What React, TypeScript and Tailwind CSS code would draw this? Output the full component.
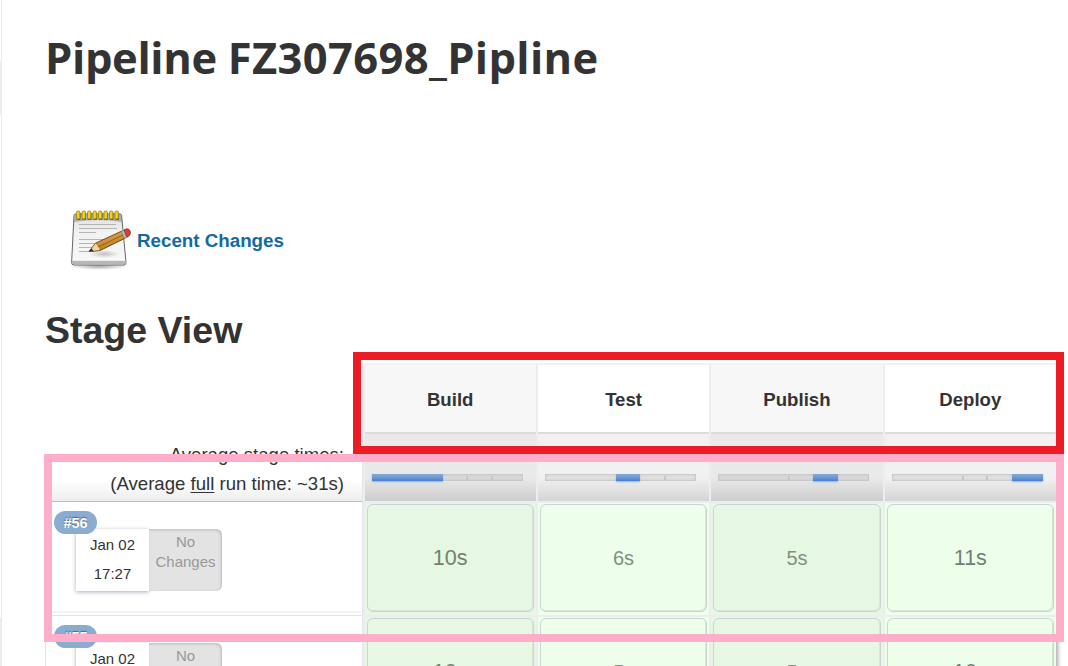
import React from "react";

type Segment = { left: number; width: number };
type Stage = { name: string; average: string; done: Segment; ticks: number[]; shaded: boolean };

const stages: Stage[] = [
  { name: "Build", average: "10s", done: { left: 0, width: 71 }, ticks: [94, 119], shaded: true },
  { name: "Test", average: "6s", done: { left: 71, width: 24 }, ticks: [119], shaded: false },
  { name: "Publish", average: "5s", done: { left: 95, width: 25 }, ticks: [70], shaded: true },
  { name: "Deploy", average: "9s", done: { left: 120, width: 31 }, ticks: [70, 94], shaded: false },
];

const runs = [
  { id: "#56", date: "Jan 02", time: "17:27", times: ["10s", "6s", "5s", "11s"] },
  { id: "#55", date: "Jan 02", time: "17:25", times: ["10s", "5s", "5s", "10s"] },
];

const columns = "grid grid-cols-4 gap-x-[2px] pl-[1.500px] bg-[#ededef]";

function NotepadIcon() {
  return (
    <svg width="64" height="64" viewBox="0 0 64 64" className="shrink-0">
      <defs>
        <linearGradient id="paper" x1="0" y1="0" x2="0" y2="1">
          <stop offset="0" stopColor="#dcdcdc" />
          <stop offset="0.35" stopColor="#f2f2f2" />
          <stop offset="1" stopColor="#f7f7f7" />
        </linearGradient>
        <linearGradient id="wood" x1="0" y1="0" x2="0.5" y2="1">
          <stop offset="0" stopColor="#e9b768" />
          <stop offset="1" stopColor="#b87518" />
        </linearGradient>
        <radialGradient id="shade">
          <stop offset="0" stopColor="#000" stopOpacity="0.35" />
          <stop offset="1" stopColor="#000" stopOpacity="0" />
        </radialGradient>
      </defs>
      <ellipse cx="31" cy="58" rx="30" ry="4" fill="url(#shade)" />
      <path d="M7.5 6H52Q53.500 6 53.600 7.500L58 54.500Q58 57 56 57H6Q3.500 57 3.600 54.500L6 7.500Q6 6 7.500 6Z" fill="url(#paper)" stroke="#666" strokeWidth="1" />
      <path d="M6.500 6.500H53L54 14Q30 10 6 14Z" fill="#8c8c87" opacity="0.6" />
      <path d="M4 52.500H57.500L57.500 56H4Z" fill="#b6b6b6" />
      <path d="M4.500 52H57" stroke="#fff" />
      <path d="M11 16.500H48M11 20.500H49M11 24.500H28M11 31.500H45M11 35.500H40M11 39.500H32M11 43.500H25" stroke="#b5b5b5" strokeWidth="1.1" />
      {[10, 15.5, 21, 26.5, 32, 37.5, 43, 48.5].map((x) => (
        <g key={x}>
          <rect x={x - 1.5} y="4" width="4" height="8" rx="1.5" fill="#575744" />
          <rect x={x - 1.5} y="3" width="3.4" height="8" rx="1.5" fill="#ecd22e" stroke="#a58a0c" strokeWidth="0.9" />
        </g>
      ))}
      <ellipse cx="36" cy="46" rx="15" ry="4" fill="url(#shade)" opacity="0.6" />
      <path d="M21 43.5L27.500 35.200L54 23L57.500 30L32 42.500Z" fill="url(#wood)" stroke="#704912" strokeWidth="1" />
      <path d="M21 43.5L27.500 35.200Q30 36 30.500 39Q32.500 40 32 42.500Z" fill="#f0d6a4" stroke="#85591f" strokeWidth="0.6" />
      <path d="M21 43.5L23.500 40.200L25.500 43.200Z" fill="#332b22" />
      <path d="M31 38.500L56 26.500" stroke="#8b5612" strokeWidth="0.8" />
      <path d="M53 23.500L56.500 21.900L60 28.700L56.500 30.5Z" fill="#b7b7b7" stroke="#777" strokeWidth="0.6" />
      <path d="M56 22L58.500 20.800Q61.500 20.500 62.500 24Q62.800 27 60 28.600L58.800 29Z" fill="#e23b35" stroke="#7c3025" strokeWidth="0.8" />
    </svg>
  );
}

function AverageCell({ stage }: { stage: Stage }) {
  return (
    <div className={`h-[69px] border-t-2 border-[#dcdcdc] ${stage.shaded ? "bg-[#e9e9e9]" : "bg-[#f1f1f1]"}`}>
      <div className="h-full bg-linear-to-b from-transparent from-65% to-black/12">
        <div className="h-[40px] pt-[8px] text-center text-[19px] leading-[24px] text-[#999]">{stage.average}</div>
        <div className={`relative ml-[7px] h-[7px] w-[151px] shadow-[inset_0_0_2px_1px_#c5c5c5] ${stage.shaded ? "bg-[#d8d8d8]" : "bg-[#e0e0e0]"}`}>
          {stage.ticks.map((tick) => (
            <span key={tick} className="absolute top-[2px] h-[4px] w-[2px] bg-[#c7c7c7]" style={{ left: tick }} />
          ))}
          <span
            className="absolute top-0 h-[7px] bg-linear-to-b from-[#83a9d6] via-[#6d9ad4] to-[#4a7dcc] shadow-[0_1px_2px_#9aaed0]"
            style={{ left: stage.done.left, width: stage.done.width }}
          />
        </div>
      </div>
    </div>
  );
}

export default function App() {
  return (
    <div className="relative h-[666px] w-[1068px] overflow-hidden bg-white font-['Liberation_Sans',Arial,sans-serif] text-[#333]">
      <div className="flex h-full">
        <aside className="h-full w-[2px] shrink-0 border-r border-[#e7ebed] pt-[61px]">
          <div className="h-[54px] bg-[#e8eef1]" />
          <div className="mt-[503px] h-[48px] bg-[#e8eef1]" />
        </aside>
        <main className="w-[1066px] shrink-0 pl-[43px]">
          <h1 className="h-[205px] pt-[28px] font-['Open_Sans','Noto_Sans',sans-serif] text-[43.500px] leading-[60px] font-bold whitespace-nowrap">
            <span className="tracking-[-0.350px]">Pipeline </span>
            <span className="tracking-[0.350px]">FZ307698_Pipline</span>
          </h1>
          <div className="flex h-[80px] items-start pt-[3px] pl-[23px]">
            <NotepadIcon />
            <a className="ml-[5px] pt-[22px] text-[18.750px] leading-[22px] font-bold whitespace-nowrap text-[#106ba3]">Recent Changes</a>
          </div>
          <h2 className="h-[78px] pt-[22px] text-[37.500px] leading-[46px] font-bold whitespace-nowrap">Stage View</h2>

          <section className="flex w-[1011px] items-start shadow-[2px_0_4px_#aaa] [clip-path:inset(0_-6px_0_0)]">
            <div className="w-[317px] shrink-0 bg-white">
              <div className="h-[70px]" />
              <div className="flex h-[69px] flex-col items-end border-b border-[#bdbdbd] bg-linear-to-b from-white from-70% to-[#ededed] pr-[18px] text-[18.600px]">
                <div className="h-[36px] pt-[8px] leading-[28px] whitespace-nowrap">Average stage times:</div>
                <div className="leading-[30px] whitespace-nowrap">(Average <u className="underline-offset-2">full</u> run time: ~31s)</div>
              </div>
              {runs.map((run) => (
                <div key={run.id} className="h-[113.500px] border-b border-l border-[#e4e4e4] pr-[1px]">
                  <div className="h-[111px] border-b-2 border-[#f4f4f4] pt-[27px] pl-[30px]">
                    <div className="relative flex h-[62px]">
                      <div className="w-[73px] bg-white pt-[4px] text-center text-[15px] leading-[24px] shadow-[0_1px_4px_#aab]">
                        <div>{run.date}</div>
                        <div className="mt-[5px]">{run.time}</div>
                      </div>
                      <div className="w-[73px] rounded-r-[6px] bg-[#e3e3e3] pt-[3px] text-center text-[15px] leading-[20px] text-[#999] shadow-[inset_-1px_1px_3px_#bbb]">
                        No<br />Changes
                      </div>
                      <span className="absolute -top-[18px] -left-[22px] h-[23px] w-[43px] rounded-full bg-[#8aacd3] text-center text-[14.500px] leading-[25px] font-bold text-white [text-shadow:0_-1px_1px_#567]">
                        {run.id}
                      </span>
                    </div>
                  </div>
                </div>
              ))}
            </div>

            <div className="w-[694px] shrink-0 border-l border-[#e2e6ea]">
              <div className={`${columns} border-t-2 border-[#eff1f3]`}>
                {stages.map((stage) => (
                  <div key={stage.name} className={`h-[67px] text-center text-[18.600px] leading-[69px] font-bold ${stage.shaded ? "bg-[#f7f7f7]" : "bg-white"}`}>
                    {stage.name}
                  </div>
                ))}
              </div>
              <div className={columns}>
                {stages.map((stage) => <AverageCell key={stage.name} stage={stage} />)}
              </div>
              {runs.map((run) => (
                <div key={run.id} className={`${columns} pt-[2px]`}>
                  {run.times.map((time, i) => (
                    <div key={i} className={`h-[111.500px] px-[2px] pt-[1px] pb-[2px] ${i % 2 === 0 ? "bg-[#e6f7e3]" : "bg-[#edffea]"}`}>
                      <div className={`h-[108px] rounded-[6px] border border-[#cbd4d0] text-center leading-[106px] shadow-[inset_-1px_-1px_0_#d9e6da] ${time.length > 2 ? "text-[21.500px] text-[#727f70]" : "text-[20px] text-[#829080]"}`}>
                        {time}
                      </div>
                    </div>
                  ))}
                </div>
              ))}
            </div>
          </section>
        </main>
      </div>
      <div className="pointer-events-none absolute top-[352px] left-[353px] h-[102px] w-[711px] border-8 border-[#ed1c24]" />
      <div className="pointer-events-none absolute top-[454px] left-[44px] h-[188px] w-[1020px] border-8 border-[#ffaec9]" />
    </div>
  );
}
